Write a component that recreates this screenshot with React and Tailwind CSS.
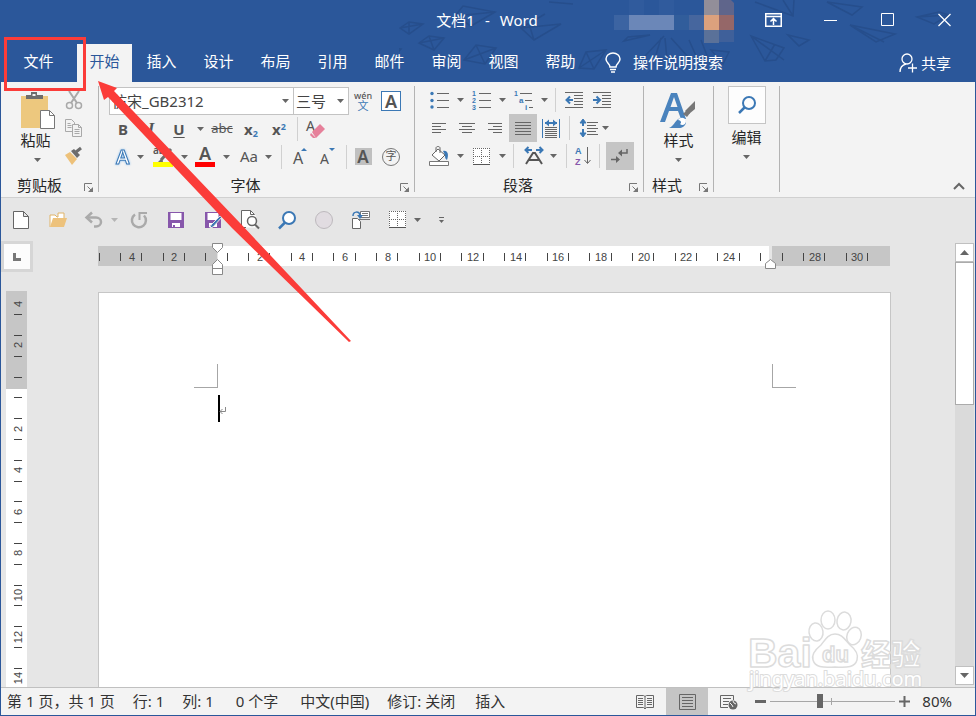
import React, { useState } from 'react';

const tabs = ['开始', '插入', '设计', '布局', '引用', '邮件', '审阅', '视图', '帮助'];

const Svg = ({ w = 24, h = 24, className = '', children }) => (
  <svg width={w} height={h} viewBox={`0 0 ${w} ${h}`} fill="none" className={`shrink-0 overflow-visible ${className}`} aria-hidden="true">
    {children}
  </svg>
);

const Caret = ({ color = '#666' }) => (
  <Svg w={7} h={4}><path d="M0 0h7L3.5 4z" fill={color} /></Svg>
);

const IconButton = ({ label, className = 'w-7', children }) => (
  <button type="button" aria-label={label} className={`flex h-7 shrink-0 items-center justify-center text-[#555] ${className}`}>
    {children}
  </button>
);

const Drop = ({ label, className = 'w-[14px] justify-center' }) => (
  <button type="button" aria-label={label} className={`flex h-7 shrink-0 items-center ${className}`}>
    <Caret />
  </button>
);

const Sep = () => <div className="mx-1 h-6 w-px shrink-0 bg-[#d0d0d0]" />;

const Lines = ({ rows, color = '#666' }) =>
  rows.map(([x, y, w]) => <rect key={`${x}-${y}`} x={x} y={y} width={w} height="1" fill={color} />);

const Launcher = ({ label }) => (
  <button type="button" aria-label={label} className="absolute right-1 bottom-0.5">
    <Svg w={10} h={10}>
      <path d="M.5 8V.5H8" stroke="#777" />
      <path d="M3.5 3.5l4 4" stroke="#777" />
      <path d="M9 4v5H4z" fill="#777" />
    </Svg>
  </button>
);

const Group = ({ title, className = '', labelClass = 'justify-center', children }) => (
  <section className={`flex shrink-0 flex-col border-r border-[#b3b3b3] ${className}`}>
    <div className="h-[84px] shrink-0">{children}</div>
    <div className={`relative mt-[5px] flex h-5 shrink-0 items-center text-[15px] ${labelClass}`}>
      {title}
      <Launcher label={`${title}设置`} />
    </div>
  </section>
);

const Clipboard = () => (
  <Group title="剪贴板" className="w-[98px]" labelClass="justify-start pl-4">
    <div className="flex">
      <button type="button" className="flex w-[57px] flex-col items-center pt-[5px] pl-4 text-[15px] leading-5">
        <Svg w={36} h={38}>
          <path d="M1 5h27v32H1z" fill="#edc87e" />
          <path d="M6 8V4h5V1h6v3h6v4z" fill="#6d6d6d" />
          <path d="M12.500 3h3v2h-3z" fill="#f3f3f3" />
          <path d="M20.500 19.500h9l5 5v13h-14z" fill="#fff" stroke="#777" />
          <path d="M29.500 19.500v5h5" stroke="#777" />
        </Svg>
        <span className="mt-px -ml-1">粘贴</span>
        <span className="mt-2 block"><Caret /></span>
      </button>
      <div className="flex flex-col pl-0.5">
        <IconButton label="剪切">
          <Svg w={18} h={20}>
            <path d="M4 1l8 12M14 1L6 13" stroke="#a9a9a9" strokeWidth="2" />
            <circle cx="4.500" cy="15.500" r="3" stroke="#a9a9a9" strokeWidth="1.500" />
            <circle cx="13.500" cy="15.500" r="3" stroke="#a9a9a9" strokeWidth="1.500" />
          </Svg>
        </IconButton>
        <IconButton label="复制">
          <Svg w={18} h={18}>
            <path d="M.5.5h6l3 3v9h-9z" stroke="#a9a9a9" />
            <path d="M7.500 5.500h6l3 3v9h-9z" fill="#f3f3f3" stroke="#a9a9a9" />
            <path d="M13.500 5.500v3h3M2.500 4.500h3M2.500 6.500h4M2.500 8.500h4M9.500 10.500h5M9.500 12.500h5M9.500 14.500h5" stroke="#a9a9a9" />
          </Svg>
        </IconButton>
        <IconButton label="格式刷">
          <Svg w={18} h={18}>
            <path d="M0 8l5-3 7 7-5 6z" fill="#edc17a" />
            <path d="M6 4l3-2 6 6-3 3z" fill="#6d6d6d" />
            <path d="M11 5l5-4" stroke="#6d6d6d" strokeWidth="3" />
          </Svg>
        </IconButton>
      </div>
    </div>
  </Group>
);

const FontGroup = () => (
  <Group title="字体" className="w-[316px] pl-[10px]" labelClass="justify-center pr-8">
    <div className="flex h-[30px] items-center">
      <div className="relative">
        <select aria-label="字体" className="h-7 w-[185px] appearance-none border border-[#c3c3c3] bg-white pl-0.5 text-[15px] text-[#444]">
          <option>仿宋_GB2312</option>
        </select>
        <span className="pointer-events-none absolute top-3 right-[5px]"><Caret /></span>
      </div>
      <div className="relative -ml-px">
        <select aria-label="字号" className="h-7 w-14 appearance-none border border-[#c3c3c3] bg-white pl-0.5 text-[15px] text-[#444]">
          <option>三号</option>
        </select>
        <span className="pointer-events-none absolute top-3 right-[5px]"><Caret /></span>
      </div>
      <IconButton label="拼音指南">
        <span className="flex flex-col items-center">
          <span className="text-[9px] leading-[9px] font-medium">wén</span>
          <span className="text-[11px] leading-[11px] text-[#3b78b5]">文</span>
        </span>
      </IconButton>
      <IconButton label="字符边框">
        <span className="flex h-5 w-5 items-center justify-center border border-[#3b78b5] bg-white text-[18px] font-semibold">A</span>
      </IconButton>
    </div>
    <div className="-mt-px flex h-7 items-center">
      <IconButton label="加粗"><b className="text-[15px]">B</b></IconButton>
      <IconButton label="倾斜"><b className="font-['Liberation_Serif'] text-[17px] italic">I</b></IconButton>
      <IconButton label="下划线"><b className="text-[15px] underline underline-offset-2">U</b></IconButton>
      <Drop label="下划线样式" />
      <IconButton label="删除线" className="w-[30px]"><span className="text-[13px] line-through">abc</span></IconButton>
      <IconButton label="下标"><b className="text-[15px]">x<sub className="text-[9px] text-[#3b78b5]">2</sub></b></IconButton>
      <IconButton label="上标"><b className="text-[15px]">x<sup className="text-[9px] text-[#3b78b5]">2</sup></b></IconButton>
      <Sep />
      <IconButton label="清除格式">
        <Svg w={20} h={20}>
          <text x="0" y="12" fontSize="14" fill="#555">A</text>
          <path d="M6 13L14 5l5 5-9 9z" fill="#e6809a" />
          <path d="M5 14l5 5H7l-3-3z" fill="#e6809a" />
        </Svg>
      </IconButton>
    </div>
    <div className="flex h-[27px] items-center">
      <IconButton label="文本效果">
        <Svg w={20} h={20} className="drop-shadow-[0_0_1px_#8fc0ee]">
          <text x="3" y="17" fontSize="20" fontWeight="600" fill="#fff" stroke="#3b78b5" strokeWidth="1">A</text>
        </Svg>
      </IconButton>
      <Drop label="文本效果选项" className="w-3" />
      <IconButton label="突出显示">
        <Svg w={20} h={20}>
          <text x="0" y="7" fontSize="10" fontWeight="600" fill="#555">ab</text>
          <path d="M18 2L8 13" stroke="#6d6d6d" strokeWidth="3" />
          <path d="M9 11l-4 4h5z" fill="#6d6d6d" />
          <path d="M0 15h20v5H0z" fill="#ff0" />
        </Svg>
      </IconButton>
      <Drop label="突出显示颜色" />
      <IconButton label="字体颜色">
        <Svg w={20} h={20}>
          <text x="4" y="13" fontSize="18" fontWeight="600" fill="#555">A</text>
          <path d="M0 15h20v5H0z" fill="#f00" />
        </Svg>
      </IconButton>
      <Drop label="选择字体颜色" />
      <IconButton label="更改大小写" className="w-8"><span className="text-[15px]">Aa</span></IconButton>
      <Drop label="大小写选项" className="w-3" />
      <Sep />
      <IconButton label="增大字号">
        <Svg w={16} h={18}>
          <text x="1" y="16" fontSize="16" fill="#555">A</text>
          <path d="M9 3h6l-3-3z" fill="#3b78b5" />
        </Svg>
      </IconButton>
      <IconButton label="减小字号">
        <Svg w={16} h={18}>
          <text x="0" y="16" fontSize="14" fill="#555">A</text>
          <path d="M9 0h6l-3 3z" fill="#3b78b5" />
        </Svg>
      </IconButton>
      <Sep />
      <IconButton label="字符底纹" className="w-6">
        <span className="flex h-[17px] w-[17px] items-center justify-center bg-[#c0c0c0] text-[17px] font-semibold">A</span>
      </IconButton>
      <IconButton label="带圈字符" className="w-8">
        <span className="flex h-[18px] w-[18px] items-center justify-center rounded-full border border-[#777] text-[11px]">字</span>
      </IconButton>
    </div>
  </Group>
);

const BorderIcon = () => (
  <Svg w={17} h={17}>
    <path d="M0 0h17v17H0z" fill="#fff" />
    <path d="M0 .5h17M0 8.500h17M.5 0v17M8.500 0v17M16.500 0v17" stroke="#666" strokeDasharray="1 1" />
    <path d="M0 16.500h17" stroke="#555" />
  </Svg>
);

const ParagraphGroup = () => (
  <Group title="段落" className="w-[229px] pl-[10px]" labelClass="justify-center pr-8">
    <div className="flex h-7 items-center">
      <IconButton label="项目符号">
        <Svg w={20} h={18}>
          <circle cx="3" cy="2.500" r="1.700" fill="#3b78b5" />
          <circle cx="3" cy="9.500" r="1.700" fill="#3b78b5" />
          <circle cx="3" cy="16" r="1.700" fill="#3b78b5" />
          <Lines rows={[[8, 2, 12], [8, 9, 12], [8, 16, 12]]} />
        </Svg>
      </IconButton>
      <Drop label="项目符号库" />
      <IconButton label="编号">
        <Svg w={20} h={20} className="font-['Liberation_Sans']">
          <text x="1" y="6" fontSize="7" fontWeight="700" fill="#3b78b5">1</text>
          <text x="1" y="13" fontSize="7" fontWeight="700" fill="#3b78b5">2</text>
          <text x="1" y="20" fontSize="7" fontWeight="700" fill="#3b78b5">3</text>
          <Lines rows={[[8, 3, 12], [8, 10, 12], [8, 17, 12]]} />
        </Svg>
      </IconButton>
      <Drop label="编号库" />
      <IconButton label="多级列表">
        <Svg w={20} h={20} className="font-['Liberation_Sans']">
          <text x="1" y="6" fontSize="7" fontWeight="700" fill="#3b78b5">1</text>
          <text x="6" y="13" fontSize="8" fontWeight="700" fill="#3b78b5">a</text>
          <text x="12" y="20" fontSize="8" fontWeight="700" fill="#3b78b5">i</text>
          <Lines rows={[[7, 3, 12], [12, 10, 7], [16, 17, 4]]} />
        </Svg>
      </IconButton>
      <Drop label="列表库" />
      <Sep />
      <IconButton label="减少缩进量">
        <Svg w={18} h={16}>
          <Lines rows={[[0, 0, 18], [9, 3, 9], [9, 6, 9], [9, 9, 9], [9, 12, 9], [0, 15, 18]]} />
          <path d="M8 8H2M5 4.500L1.500 8 5 11.500" stroke="#3b78b5" strokeWidth="2" />
        </Svg>
      </IconButton>
      <IconButton label="增加缩进量">
        <Svg w={18} h={16}>
          <Lines rows={[[0, 0, 18], [9, 3, 9], [9, 6, 9], [9, 9, 9], [9, 12, 9], [0, 15, 18]]} />
          <path d="M0 8h6M3.500 4.500L7 8l-3.500 3.500" stroke="#3b78b5" strokeWidth="2" />
        </Svg>
      </IconButton>
    </div>
    <div className="flex h-7 items-center">
      <IconButton label="左对齐">
        <Svg w={14} h={11}><Lines rows={[[0, 0, 14], [0, 3, 9], [0, 6, 14], [0, 9, 9]]} /></Svg>
      </IconButton>
      <IconButton label="居中">
        <Svg w={16} h={11}><Lines rows={[[0, 0, 16], [3, 3, 10], [0, 6, 16], [3, 9, 10]]} /></Svg>
      </IconButton>
      <IconButton label="右对齐">
        <Svg w={14} h={11}><Lines rows={[[0, 0, 14], [5, 3, 9], [0, 6, 14], [5, 9, 9]]} /></Svg>
      </IconButton>
      <IconButton label="两端对齐" className="w-7 bg-[#c5c5c5]">
        <Svg w={16} h={13}><Lines rows={[[0, 0, 16], [0, 3, 16], [0, 6, 16], [0, 9, 16], [0, 12, 16]]} /></Svg>
      </IconButton>
      <IconButton label="分散对齐">
        <Svg w={18} h={19}>
          <path d="M.5 0v19M17.500 0v19M3 4h12" stroke="#3b78b5" />
          <path d="M3 4l4-3.500v7zM15 4l-4-3.500v7z" fill="#3b78b5" />
          <path d="M3 4h12" stroke="#3b78b5" strokeWidth="2" />
          <Lines rows={[[3, 8, 12], [3, 10, 12], [3, 12, 12], [3, 14, 12], [3, 16, 12], [3, 18, 12]]} />
        </Svg>
      </IconButton>
      <Sep />
      <IconButton label="行和段落间距">
        <Svg w={18} h={20}>
          <path d="M4 2v6M4 11v7" stroke="#3b78b5" strokeWidth="2" />
          <path d="M1 5l3-4 3 4zM1 15l3 4 3-4z" fill="#3b78b5" stroke="#3b78b5" />
          <Lines rows={[[8, 4, 11], [8, 7, 9], [8, 10, 11], [8, 13, 9], [8, 16, 11]]} />
        </Svg>
      </IconButton>
      <Drop label="行距选项" className="w-3" />
    </div>
    <div className="flex h-7 items-center">
      <IconButton label="底纹">
        <Svg w={20} h={20}>
          <path d="M9 3l7 6-6 6-7-6z" fill="#fff" stroke="#666" />
          <path d="M7 6V2c0-2 4-2 4 0v5" stroke="#666" />
          <path d="M14 5c5-1 6 4 4 9-2-1-2-3-2-5z" fill="#3b78b5" />
          <path d="M.5 15.500h19v4H.5z" fill="#fff" stroke="#777" />
        </Svg>
      </IconButton>
      <Drop label="底纹颜色" />
      <IconButton label="边框"><BorderIcon /></IconButton>
      <Drop label="边框选项" />
      <Sep />
      <IconButton label="中文版式" className="w-8">
        <Svg w={20} h={20}>
          <path d="M2 4h6M12 4h6" stroke="#3b78b5" strokeWidth="2" />
          <path d="M4.500 1l-3 3 3 3M15.500 1l3 3-3 3" stroke="#3b78b5" strokeWidth="2" />
          <path d="M2 18L9 7h2l7 11M5 14h10" stroke="#555" strokeWidth="2" />
        </Svg>
      </IconButton>
      <Drop label="中文版式选项" className="w-3" />
      <Sep />
      <IconButton label="排序" className="w-6">
        <Svg w={18} h={20} className="font-['Liberation_Sans']">
          <text x="1" y="8" fontSize="9" fontWeight="600" fill="#3b78b5">A</text>
          <text x="1" y="19" fontSize="9" fontWeight="600" fill="#8757ab">Z</text>
          <path d="M13.500 1v16M10.500 14l3 3.500 3-3.500" stroke="#666" />
        </Svg>
      </IconButton>
      <Sep />
      <IconButton label="显示编辑标记" className="ml-0.5 w-7 bg-[#c5c5c5]">
        <Svg w={18} h={16}>
          <path d="M16 1v4H9" stroke="#666" strokeWidth="1.500" />
          <path d="M11 1.500v7L7 5zM5 8v7l4-3.500z" fill="#666" />
          <path d="M0 11.500h6" stroke="#666" strokeWidth="1.500" />
        </Svg>
      </IconButton>
    </div>
  </Group>
);

const Ribbon = () => (
  <div className="flex h-[116px] shrink-0 border-b border-[#d0d0d0] bg-[#f3f3f3] pt-1 pb-[5px] text-[#262626]">
    <Clipboard />
    <FontGroup />
    <ParagraphGroup />
    <Group title="样式" className="w-[70px]" labelClass="justify-start pl-2">
      <button type="button" className="flex w-full flex-col items-center pt-1.5 text-[15px] leading-5">
        <Svg w={37} h={36}>
          <path d="M0 30L11 1h6l9 26h-5l-3-8H9L5 30zM10.500 15h7L14 5z" fill="#4a83bd" />
          <path d="M35 9v8l-6 5-4-3z" fill="#777" />
          <path d="M27 18l3 3-3 4-4-3z" fill="#777" />
          <path d="M9 36c6-2 6-10 13-10 7 2 4 10-3 10z" fill="#4a83bd" />
          <path d="M18 28c2-3 7-3 8 1 0 4-4 5-6 3 2-1 1-4-2-4z" fill="#fff" />
        </Svg>
        <span className="mt-0.5">样式</span>
        <span className="mt-2 block"><Caret /></span>
      </button>
    </Group>
    <section className="w-[66px] shrink-0 border-r border-[#b3b3b3]">
      <button type="button" className="flex w-full flex-col items-center text-[15px] leading-5">
        <span className="flex h-[38px] w-[38px] items-center justify-center border border-[#c5c5c5] bg-[#fdfdfd]">
          <Svg w={20} h={20}>
            <circle cx="12" cy="8" r="6" stroke="#3b78b5" strokeWidth="2" />
            <path d="M7.500 12.500L2 18" stroke="#3b78b5" strokeWidth="2.500" />
          </Svg>
        </span>
        <span className="mt-[3px]">编辑</span>
        <span className="mt-2 block"><Caret /></span>
      </button>
    </section>
    <button type="button" aria-label="折叠功能区" className="mr-2.5 ml-auto self-end pb-0.5">
      <Svg w={12} h={8}><path d="M1 7l5-5 5 5" stroke="#666" strokeWidth="2" /></Svg>
    </button>
  </div>
);

// faint paper planes behind the title bar, plus the blurred account tile
const HeaderArt = () => (
  <svg className="absolute top-0 right-0" width="576" height="82" viewBox="0 0 576 82" fill="none" aria-hidden="true">
    <g stroke="#264e8c" strokeWidth="1.500">
      <path d="M1 28l9-6 14 2-14 10zM1 28l23-4M10 22v12" />
      <path d="M20 43l10-7 15 2-10 12zM20 43l25-5M30 36l5 14" />
      <path d="M56 16l8-10 32 6-24 14zM56 16l40-4" />
      <path d="M65 60l12-15 20 3-11 16zM65 60l32-12M77 45l9 19" />
      <path d="M122 28l40-4-27 16zM122 28l24-14M135 40l-5-16" />
      <path d="M180 68l7-16 20-2-12 19zM180 68l27-18M187 52l8 17" />
      <path d="M225 41l26-6-22 2zM150 2l24 2M-20 54l8-7 14 2-8 8z" />
      <path d="M265 36l-19 20M262 38l-6 20M266 38l2 22M272 38l18 20M290 40l8 18M302 40l10 26M312 50l18 2-6 12z" />
      <path d="M352 36l33 12-8 12-11 1zM352 36l33 24M366 61l10-17" />
      <path d="M356 2l38 14 1-16M384 0l10 16M389 35l21 5-10 6zM389 35l11 11" />
      <path d="M428 2l35 5-10 8zM451 25l45 9-19 8zM451 25l34 17M518 17l22-5 10 3-15 9zM518 17l32-2" />
    </g>
    <path d="M230 0h15v15h-15zM260 0h15v15h-15z" fill="#305b9d" />
    <path d="M215 15h15v15h-15z" fill="#3c64a2" />
    <path d="M230 15h45v15h-45z" fill="#6b87b8" />
    <path d="M275 15h15v15h-15z" fill="#315d9b" />
    <path d="M290 15h15v15h-15z" fill="#46669e" />
    <path d="M305 0h15v15h-15z" fill="#928e99" />
    <path d="M320 0h12l3 3v12h-15z" fill="#5f658b" />
    <path d="M305 15h15v15h-15z" fill="#dca17d" />
    <path d="M320 15h15v15h-15z" fill="#956768" />
    <path d="M305 30h15v13h-15z" fill="#5a7199" />
    <path d="M320 30h15v12h-15z" fill="#3f609a" />
  </svg>
);

const Header = () => {
  const [active, setActive] = useState('开始');

  return (
    <header className="relative shrink-0 bg-[#2b579a] text-[15px] text-white">
      <HeaderArt />
      <div className="relative grid h-11 grid-cols-[1fr_auto_1fr] items-center pr-0.5 pb-1">
        <span />
        <h1 className="flex gap-2.5"><span>文档1</span><span>-</span><span>Word</span></h1>
        <div className="flex justify-end">
          <button type="button" aria-label="功能区显示选项" className="flex w-[57px] justify-center">
            <Svg w={17} h={14}>
              <path d="M.75.75h15.500v12.500H.75zM1 3.500h15M8.500 12V6M5.500 8.500l3-3 3 3" stroke="#fff" strokeWidth="1.500" />
            </Svg>
          </button>
          <button type="button" aria-label="最小化" className="flex w-[57px] justify-center">
            <Svg w={13} h={14}><path d="M0 7.500h13" stroke="#fff" /></Svg>
          </button>
          <button type="button" aria-label="最大化" className="flex w-[57px] justify-center">
            <Svg w={13} h={14}><path d="M.5.5h12v12H.5z" stroke="#fff" /></Svg>
          </button>
          <button type="button" aria-label="关闭" className="flex w-[57px] justify-center">
            <Svg w={13} h={14}><path d="M.5 1l12 12M12.500 1l-12 12" stroke="#fff" strokeWidth="1.300" /></Svg>
          </button>
        </div>
      </div>
      <nav className="relative flex h-[38px] items-center">
        <button type="button" className="h-full w-[75px] pb-[3px]">文件</button>
        {tabs.map(tab => (
          <button
            key={tab}
            type="button"
            onClick={() => setActive(tab)}
            className={`mx-px h-full w-[55px] pb-[3px] ${active === tab ? 'bg-[#f3f3f3] text-[#2b579a]' : ''}`}
          >
            {tab}
          </button>
        ))}
        <button type="button" className="ml-4 flex items-center gap-3">
          <Svg w={16} h={20}>
            <path d="M5 14c0-3-4-4-4-8a7 6 0 0 1 14 0c0 4-4 5-4 8z" stroke="#fff" strokeWidth="1.500" />
            <path d="M5 16.500h6M6 19h4" stroke="#fff" strokeWidth="1.500" />
          </Svg>
          <span className="pb-0.5">操作说明搜索</span>
        </button>
        <button type="button" className="mr-6 ml-auto flex items-center gap-1">
          <Svg w={18} h={20}>
            <circle cx="8" cy="6" r="5" stroke="#fff" strokeWidth="1.300" />
            <path d="M1 19c0-5 2-7 6-8M9 15h9M13.500 10.500v9" stroke="#fff" strokeWidth="1.300" />
          </Svg>
          共享
        </button>
      </nav>
    </header>
  );
};

const SaveIcon = ({ pen }) => (
  <Svg w={20} h={18}>
    <path d="M2 1h16v16H2z" fill="#8757ab" />
    <path d="M4.500 2h11v7h-11zM6 12h8v4h-5v-2H7v2H6z" fill="#fff" />
    {pen && <path d="M19 6l-9 10-3 1 1-3 9-9z" fill="#3b78b5" stroke="#e6e6e6" />}
  </Svg>
);

const QuickAccess = () => (
  <div className="flex h-[43px] shrink-0 items-center pl-px">
    <IconButton label="新建" className="w-[37px]">
      <Svg w={16} h={18}><path d="M.5.5h10l5 5v12H.5zM10.500.5v5h5" fill="#fff" stroke="#666" /></Svg>
    </IconButton>
    <IconButton label="打开" className="w-[37px]">
      <Svg w={18} h={16}>
        <path d="M1 15V3h5l2 2h1V1h6v5" fill="#fff" stroke="#e0b468" />
        <path d="M4 6h14l-3 9H1z" fill="#edc27c" />
      </Svg>
    </IconButton>
    <IconButton label="撤消" className="ml-1 w-7">
      <Svg w={20} h={16}>
        <path d="M3 5.500h9a5 4.500 0 0 1 0 9h-2" stroke="#aaa" strokeWidth="2.500" />
        <path d="M8 .5l-5.500 5 5.500 5" stroke="#aaa" strokeWidth="2.500" />
      </Svg>
    </IconButton>
    <button type="button" aria-label="撤消记录" className="flex w-3 justify-center"><Caret color="#b5b5b5" /></button>
    <IconButton label="重复" className="w-[37px]">
      <Svg w={18} h={18}>
        <path d="M5 3.500a7 7 0 1 0 9 1" stroke="#aaa" strokeWidth="2.500" />
        <path d="M9.500 9V2H17" stroke="#aaa" strokeWidth="2" />
      </Svg>
    </IconButton>
    <IconButton label="保存" className="w-[37px]"><SaveIcon /></IconButton>
    <IconButton label="另存为" className="w-[37px]"><SaveIcon pen /></IconButton>
    <IconButton label="打印预览" className="w-[37px]">
      <Svg w={20} h={19}>
        <path d="M1.500.5h9l5 5v12h-14z" fill="#fff" />
        <path d="M6 17.500H1.500V.5h9l4 4M10.500.5v4h4" stroke="#666" />
        <circle cx="12" cy="11" r="4.500" fill="#fff" stroke="#666" strokeWidth="1.500" />
        <path d="M15 14.500l4 4" stroke="#666" strokeWidth="2" />
      </Svg>
    </IconButton>
    <IconButton label="查找" className="w-[37px]">
      <Svg w={18} h={18}>
        <circle cx="11" cy="7" r="6" fill="#fff" stroke="#3b78b5" strokeWidth="2" />
        <path d="M7 11.500l-6 6" stroke="#3b78b5" strokeWidth="2.500" />
      </Svg>
    </IconButton>
    <IconButton label="形状" className="w-[37px]">
      <Svg w={18} h={18}><circle cx="9" cy="9" r="8.500" fill="#e1dce1" stroke="#bdb9bd" /></Svg>
    </IconButton>
    <IconButton label="格式" className="w-[37px]">
      <Svg w={18} h={18}>
        <path d="M8.500.5h9v6h-9z" fill="#fff" stroke="#777" />
        <path d="M10 2.500h6M10 4.500h6M6 8.500h12" stroke="#777" />
        <path d="M.5 7.500h5l3 3v7h-8z" fill="#fff" stroke="#666" />
        <path d="M1 5c0-5 6-5 7-1v2" stroke="#3b78b5" strokeWidth="1.500" />
        <path d="M5 4h6L8 8z" fill="#3b78b5" />
      </Svg>
    </IconButton>
    <IconButton label="表格边框" className="ml-1 w-7"><BorderIcon /></IconButton>
    <button type="button" aria-label="表格边框选项" className="flex w-3 justify-center"><Caret /></button>
    <IconButton label="自定义快速访问工具栏" className="w-[37px]">
      <Svg w={5} h={6}><path d="M0 .5h5" stroke="#666" /><path d="M0 3h5L2.500 6z" fill="#666" /></Svg>
    </IconButton>
  </div>
);

const H_UNIT = 21.34;
const V_UNIT = 20.8;
const hTicks = Array.from({ length: 37 }, (_, i) => i - 5.5);
const hNumbers = [-4, -2, 2, 4, 6, 8, 10, 12, 14, 16, 18, 20, 22, 24, 28, 30];
const vTicks = Array.from({ length: 18 }, (_, i) => i - 3.5);
const vNumbers = [-4, -2, 2, 4, 6, 8, 10, 12, 14];

const HorizontalRuler = () => (
  <svg width="793" height="34" viewBox="0 0 793 34" className="block font-['Liberation_Sans']" aria-label="标尺">
    <path d="M0 5h119v20H0zM674 5h118v20H674z" fill="#c6c6c6" />
    <path d="M120 5h551v20H120z" fill="#fff" />
    {hTicks.map(t => (
      <rect key={t} x={Math.round(118 + t * H_UNIT)} y="12" width="1" height="8" fill="#444" />
    ))}
    {hNumbers.map(n => (
      <text key={n} x={Math.round(119 + n * H_UNIT)} y="20" fontSize="11" textAnchor="middle" fill="#444">{Math.abs(n)}</text>
    ))}
    <g fill="#fff" stroke="#888">
      <path d="M114.500 2.500h10v4l-5 5-5-5z" />
      <path d="M114.500 33.500v-10l5-5 5 5v10zM114.500 27.500h10" />
      <path d="M667.500 27.500v-5l5-4 5 4v5z" />
    </g>
  </svg>
);

const VerticalRuler = () => (
  <div className="mt-[19px] ml-[5px] min-h-0 flex-1 overflow-hidden bg-white">
    <svg width="21" height="396" viewBox="0 0 21 396" className="block font-['Liberation_Sans']" aria-label="垂直标尺">
      <path d="M0 0h21v98H0z" fill="#c6c6c6" />
      {vTicks.map(t => (
        <rect key={t} x="8" y={Math.round(96 + t * V_UNIT)} width="8" height="1" fill="#444" />
      ))}
      {vNumbers.map(n => {
        const y = Math.round(96 + n * V_UNIT);
        return (
          <text key={n} x="16" y={y} fontSize="11" textAnchor="middle" fill="#444" transform={`rotate(-90 16 ${y})`}>
            {Math.abs(n)}
          </text>
        );
      })}
    </svg>
  </div>
);

const Workspace = () => (
  <main className="flex min-h-0 flex-1">
    <div className="flex w-[33px] shrink-0 flex-col">
      <button type="button" aria-label="制表符" className="flex h-[31px] w-8 items-center justify-center border-3 border-[#d6d6d6] bg-[#fcfcfc]">
        <Svg w={8} h={8}><path d="M1.500 0v6.500H8" stroke="#777" strokeWidth="3" /></Svg>
      </button>
      <div className="flex min-h-0 w-[26px] flex-1 flex-col"><VerticalRuler /></div>
    </div>
    <div className="flex min-w-0 flex-1 flex-col overflow-hidden">
      <div className="mx-auto flex min-h-0 w-full max-w-[793px] flex-1 flex-col">
        <HorizontalRuler />
        <div className="mt-[17px] flex-1 border border-b-0 border-[#c6c6c6] bg-white pt-[71px] pr-[94px] pl-[95px]">
          <div className="flex justify-between">
            <div className="h-6 w-6 border-r border-b border-[#a6a6a6]" />
            <div className="h-6 w-6 border-b border-l border-[#a6a6a6]" />
          </div>
          <div className="mt-[7px] ml-6 flex items-center">
            <div className="h-[27px] w-0.5 bg-black" />
            <Svg w={6} h={8} className="mt-1"><path d="M5.500 0v4.500H0M2.500 2L0 4.500 2.500 7" stroke="#888" /></Svg>
          </div>
        </div>
      </div>
    </div>
    <div className="mt-0.5 mr-px mb-[2px] flex w-[19px] shrink-0 flex-col bg-[#dadada]">
      <button type="button" aria-label="向上滚动" className="flex h-[19px] items-center justify-center border border-[#c0c0c0] bg-white">
        <Svg w={9} h={5}><path d="M0 5h9L4.500 0z" fill="#666" /></Svg>
      </button>
      <div className="h-[143px] border border-[#ababab] bg-white" />
      <button type="button" aria-label="向下滚动" className="mt-auto flex h-[19px] items-center justify-center border border-[#c0c0c0] bg-white">
        <Svg w={9} h={5}><path d="M0 0h9L4.500 5z" fill="#666" /></Svg>
      </button>
    </div>
  </main>
);

const StatusBar = () => {
  const [zoom, setZoom] = useState(39);

  return (
    <footer className="flex h-7 shrink-0 items-center border-t border-[#c0c0c0] bg-[#f3f3f3] pl-1.5 text-[15px] whitespace-nowrap text-[#333]">
      <span>第 1 页，共 1 页</span>
      <span className="ml-[18px]">行: 1</span>
      <span className="ml-[18px]">列: 1</span>
      <span className="ml-[22px]">0 个字</span>
      <span className="ml-[22px]">中文(中国)</span>
      <span className="ml-[18px]">修订: 关闭</span>
      <span className="ml-5">插入</span>
      <div className="ml-auto flex h-full items-center">
        <button type="button" aria-label="阅读视图" className="flex h-full w-[42px] items-center justify-center">
          <Svg w={18} h={16}>
            <path d="M.5 1.500h7l1.500 1 1.500-1h7v12h-7L9 15l-1.500-1.500h-7zM9 2.500V15" stroke="#666" />
            <path d="M2 4.500h5M2 6.500h5M2 8.500h5M2 10.500h5M11 4.500h5M11 6.500h5M11 8.500h5M11 10.500h5" stroke="#666" />
          </Svg>
        </button>
        <button type="button" aria-label="页面视图" className="flex h-full w-[42px] items-center justify-center bg-[#c5c5c5]">
          <Svg w={17} h={16}>
            <path d="M.5.5h16v15H.5zM3 3.500h11M3 6.500h11M3 9.500h11M3 12.500h11" stroke="#666" />
          </Svg>
        </button>
        <button type="button" aria-label="Web 版式视图" className="flex h-full w-[42px] items-center justify-center">
          <Svg w={18} h={16}>
            <path d="M8 13.500H.5V1.500h13V6M3 4.500h8M3 7.500h6M3 10.500h5" stroke="#666" />
            <circle cx="13" cy="11" r="4.500" fill="#666" />
            <path d="M10 9l2 2 1 2M13 7l1 2 2 1" stroke="#f3f3f3" />
          </Svg>
        </button>
        <button type="button" aria-label="缩小" className="ml-[5px]">
          <Svg w={11} h={11}><path d="M0 5.500h11" stroke="#666" strokeWidth="3" /></Svg>
        </button>
        <div className="relative mx-1 flex items-center">
          <div className="absolute left-[61px] h-[7px] w-px bg-[#a6a6a6]" />
          <input
            type="range"
            aria-label="显示比例"
            value={zoom}
            onChange={e => setZoom(Number(e.target.value))}
            className="relative h-3.5 w-[125px] appearance-none bg-transparent [&::-webkit-slider-runnable-track]:h-px [&::-webkit-slider-runnable-track]:bg-[#a6a6a6] [&::-webkit-slider-thumb]:-mt-[7px] [&::-webkit-slider-thumb]:h-3.5 [&::-webkit-slider-thumb]:w-1.5 [&::-webkit-slider-thumb]:appearance-none [&::-webkit-slider-thumb]:bg-[#666]"
          />
        </div>
        <button type="button" aria-label="放大">
          <Svg w={11} h={11}><path d="M0 5.500h11M5.500 0v11" stroke="#666" strokeWidth="2" /></Svg>
        </button>
        <span className="mr-[23px] ml-3">80%</span>
      </div>
    </footer>
  );
};

const Watermark = () => (
  <svg className="pointer-events-none absolute right-[48px] bottom-[18px] overflow-visible" width="181" height="90" viewBox="0 0 181 90" fill="#fff" stroke="#dcdcdc" strokeWidth="1.500" aria-hidden="true">
    <g fontWeight="700" strokeLinejoin="round">
      <text x="2" y="60" fontSize="41" className="font-['Liberation_Sans']">Bai</text>
      <text x="115" y="58" fontSize="30" className="font-['Noto_Sans_CJK_SC']">经验</text>
    </g>
    <ellipse cx="70" cy="25" rx="7" ry="9" transform="rotate(-8 70 25)" />
    <ellipse cx="82" cy="13" rx="7" ry="9" />
    <ellipse cx="98" cy="14" rx="7" ry="9" transform="rotate(10 98 14)" />
    <ellipse cx="108" cy="29" rx="7" ry="9" transform="rotate(20 108 29)" />
    <path d="M89 27c7 0 10 6 15 11 5 4 9 9 7 15-2 7-9 8-22 7-13 1-20 0-22-7-2-6 3-11 8-15 4-5 7-11 14-11z" />
    <text x="76" y="55" fontSize="22" fontWeight="700" className="font-['Liberation_Sans']">du</text>
    <text x="3" y="79" fontSize="20" strokeWidth="2" paintOrder="stroke" className="font-['Noto_Sans']">jingyan.baidu.com</text>
  </svg>
);

// red frame round the file tab and the arrow pointing at it
const Callout = () => (
  <svg className="pointer-events-none absolute -top-px -left-px" width="360" height="350" viewBox="0 -1 360 350" fill="none" aria-hidden="true">
    <path d="M5.500 38.500h79v51h-79z" stroke="#fb3c39" strokeWidth="3" />
    <path d="M98 81l19 7-3 3 126 132 111 118-2 1-117-114L108 97l-4 3z" fill="#fb3c39" />
  </svg>
);

export default function App() {
  return (
    <div className="relative flex h-screen flex-col overflow-hidden border-x border-b border-[#2b579a] bg-[#e6e6e6] font-['Noto_Sans','Noto_Sans_CJK_SC',sans-serif] text-[#262626]">
      <Header />
      <Ribbon />
      <QuickAccess />
      <Workspace />
      <StatusBar />
      <Watermark />
      <Callout />
    </div>
  );
}
